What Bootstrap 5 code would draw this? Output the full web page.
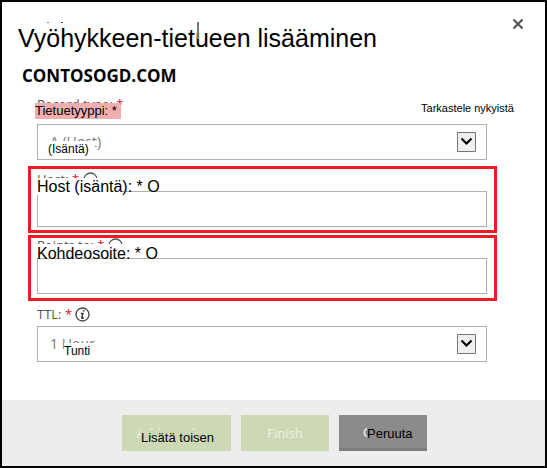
<!DOCTYPE html>
<html lang="fi">
<head>
<meta charset="utf-8">
<meta name="viewport" content="width=device-width, initial-scale=1">
<title>Vyöhykkeen-tietueen lisääminen</title>
<link href="https://cdn.jsdelivr.net/npm/bootstrap@5.3.0/dist/css/bootstrap.min.css" rel="stylesheet">
<style>
body{font-family:"Liberation Sans",Arial,sans-serif;color:#000;background:#fff}
.dialog{border:2px solid #000}
.dialog-head{padding:18px 21px 0 16px}
.dialog-title{font-size:25px;line-height:32px;font-weight:400;padding-top:2px;margin-bottom:-2px}
.title-tick{position:absolute;left:179px;top:2px;width:2px;height:17px;background:#777}
.title-dots{position:absolute;left:29px;top:2px;width:2px;height:1px;background:#888;box-shadow:14px 0 #555}
.close-x{width:12px;height:12px;line-height:0;margin-top:-2px}
.zone{font:700 17px/24px "Open Sans","Noto Sans",sans-serif;padding:12px 0 0 20px}
.fields{padding:0 48px 38px 26px}
.field{padding:0 10px 0 9px}
.marked{border:3px solid #ed1c24;padding:0 7px 3px 6px}
.marked + .marked{margin-top:2px;padding-bottom:4px}
.first{margin-top:6px}
.source{font:13px/20px "Open Sans","Noto Sans",sans-serif;color:#555}
.req{color:#d8101c}
.label-line{height:22px}
.label-line.short{height:20px}
.peek{display:block;overflow:hidden;height:9px}
.short .peek{height:6px;line-height:14px}
.over{position:absolute;white-space:nowrap;color:#000;font-family:"Liberation Sans",Arial,sans-serif}
.type-line{height:36px;padding-top:6px}
.over-type{left:-2px;top:9px;width:86px;height:16px;font-size:13px;line-height:16px;background:#f1aeae}
.view-link{font-size:11px;line-height:16px;color:#3a6fc4;padding:7px 2px 0 0;text-decoration:none}
.over-view{right:-27px;top:6px;font-size:11px;line-height:16px;background:#fff}
.over-label{left:0;top:10px;font-size:16px;line-height:16px;z-index:1}
.over-host{background:linear-gradient(#fff,#fff) 0 0/86px 100% no-repeat}
.short .over-label{top:8px}
.box,.box:focus{display:block;width:100%;height:36px;border:1px solid #b0b0b0;border-radius:0;background:#fff;box-shadow:none}
select.box{appearance:none;font:14px/20px "Open Sans","Noto Sans",sans-serif;color:#777;padding:0 40px 0 12px}
.arrow{position:absolute;right:11px;top:8px;pointer-events:none}
.over-value{top:17px;font-size:12px;line-height:16px;background:#fff;pointer-events:none;padding-right:6px}
.over-type-value{left:11px}
.over-ttl-value{left:27px}
.info{vertical-align:-3px}
.ttl-line{height:25px;padding-top:3px}
.dialog-foot{background:#ededed;padding:15px 20px 15px 22px;gap:10px}
.act{height:36px;border:0;border-radius:0;padding:0;font:13px/20px "Open Sans","Noto Sans",sans-serif;position:relative}
.act-add{width:109px;background:#cdd9b5;color:#edf1e4;text-align:left;padding-left:15px}
.act-finish{width:88px;background:#cdd9b5;color:#edf1e4}
.act-cancel{width:88px;background:#8b8b8b;border-bottom:3px solid #7e7e7e;color:#fff;text-align:left;padding-left:24px}
.over-act{font-size:13px;line-height:16px;background:inherit}
.act-add .over-act{left:19px;top:15px}
.act-cancel .over-act{left:28px;top:11px}
</style>
<script src="https://cdn.jsdelivr.net/npm/bootstrap@5.3.0/dist/js/bootstrap.bundle.min.js"></script>
</head>
<body>
<main class="dialog d-flex flex-column min-vh-100">
  <header class="dialog-head d-flex justify-content-between align-items-start">
    <h1 class="dialog-title mt-0 position-relative">Vyöhykkeen-tietueen lisääminen<span class="title-dots"></span><span class="title-tick"></span></h1>
    <button type="button" class="close-x btn border-0 p-0" aria-label="Sulje"><svg width="12" height="12" viewBox="0 0 12 12"><path d="M1.500 1.500L10.500 10.500M10.500 1.500L1.500 10.500" stroke="#555" stroke-width="2.200"/></svg></button>
  </header>
  <div class="zone">CONTOSOGD.COM</div>

  <form class="fields">
    <div class="field">
      <div class="type-line d-flex justify-content-between">
        <label class="source position-relative" for="type">Record type: <span class="req">*</span><span class="over over-type">Tietuetyyppi: *</span></label>
        <a href="#" class="view-link position-relative">View current<span class="over over-view">Tarkastele nykyistä</span></a>
      </div>
      <div class="position-relative">
        <select id="type" class="box"><option>A (Host)</option></select>
        <span class="over over-value over-type-value">(Isäntä)</span>
        <svg class="arrow" width="19" height="20" viewBox="0 0 19 20"><path d="M.5 .5H18.500V19.500H.5Z" fill="#f0f0f0" stroke="#777"/><path d="M4.500 6.500L9.500 11.500L14.500 6.500" fill="none" stroke="#000" stroke-width="2.200"/></svg>
      </div>
    </div>

    <div class="marked first">
      <div class="label-line position-relative">
        <label class="source d-block" for="host"><span class="peek">Host: <span class="req">*</span> <svg class="info" width="15" height="15" viewBox="0 0 15 15"><circle cx="7.500" cy="7.500" r="6.500" fill="none" stroke="#555" stroke-width="1.300"/></svg></span><span class="over over-label over-host">Host (isäntä): * O</span></label>
      </div>
      <input id="host" class="box" type="text">
    </div>

    <div class="marked">
      <div class="label-line short position-relative">
        <label class="source d-block" for="target"><span class="peek">Points to: <span class="req">*</span> <svg class="info" width="15" height="15" viewBox="0 0 15 15"><circle cx="7.500" cy="7.500" r="6.500" fill="none" stroke="#555" stroke-width="1.300"/></svg></span><span class="over over-label">Kohdeosoite: * O</span></label>
      </div>
      <input id="target" class="box" type="text">
    </div>

    <div class="field">
      <div class="ttl-line">
        <label class="source d-block" for="ttl">TTL: <span class="req">*</span> <svg class="info" width="15" height="15" viewBox="0 0 15 15"><circle cx="7.500" cy="7.500" r="6.500" fill="none" stroke="#444" stroke-width="1.300"/><path d="M8.700 3.200l-.3 1.300" stroke="#333" stroke-width="1.800"/><path d="M5.800 6.500h2L6.700 11q.6.600 2-.6" fill="none" stroke="#333" stroke-width="1.400"/></svg></label>
      </div>
      <div class="position-relative">
        <select id="ttl" class="box"><option>1 Hour</option></select>
        <span class="over over-value over-ttl-value">Tunti</span>
        <svg class="arrow" width="19" height="20" viewBox="0 0 19 20"><path d="M.5 .5H18.500V19.500H.5Z" fill="#f0f0f0" stroke="#777"/><path d="M4.500 6.500L9.500 11.500L14.500 6.500" fill="none" stroke="#000" stroke-width="2.200"/></svg>
      </div>
    </div>
  </form>

  <footer class="dialog-foot d-flex justify-content-center align-items-start mt-auto">
    <button type="button" class="act act-add">Add another<span class="over over-act">Lisätä toisen</span></button>
    <button type="button" class="act act-finish">Finish</button>
    <button type="button" class="act act-cancel">Cancel<span class="over over-act">Peruuta</span></button>
  </footer>
</main>
</body>
</html>
